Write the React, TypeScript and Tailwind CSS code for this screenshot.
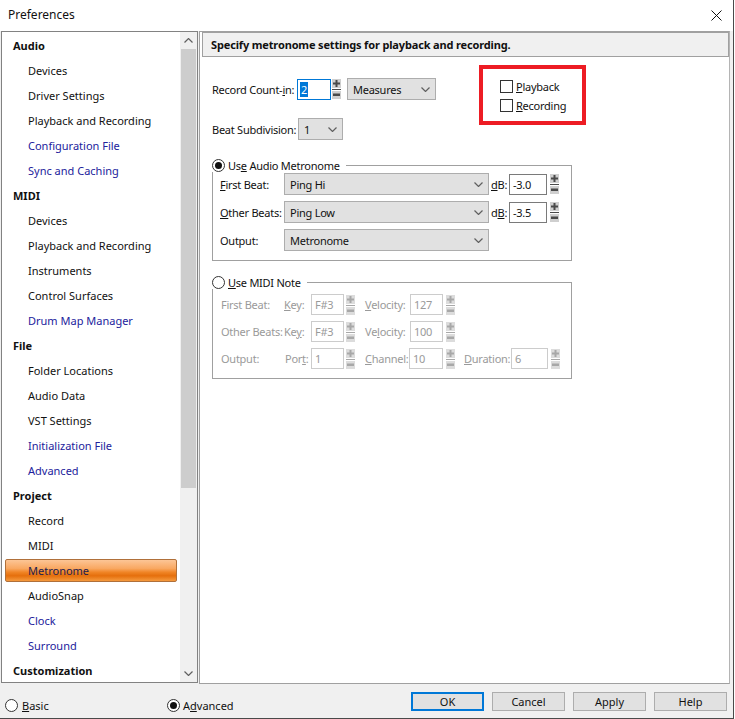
import React from "react";

// Preferences dialog — Metronome page of a DAW settings window.

type TreeItem = { label: string; head?: boolean; blue?: boolean; selected?: boolean };

const TREE: TreeItem[] = [
  { label: "Audio", head: true },
  { label: "Devices" },
  { label: "Driver Settings" },
  { label: "Playback and Recording" },
  { label: "Configuration File", blue: true },
  { label: "Sync and Caching", blue: true },
  { label: "MIDI", head: true },
  { label: "Devices" },
  { label: "Playback and Recording" },
  { label: "Instruments" },
  { label: "Control Surfaces" },
  { label: "Drum Map Manager", blue: true },
  { label: "File", head: true },
  { label: "Folder Locations" },
  { label: "Audio Data" },
  { label: "VST Settings" },
  { label: "Initialization File", blue: true },
  { label: "Advanced", blue: true },
  { label: "Project", head: true },
  { label: "Record" },
  { label: "MIDI" },
  { label: "Metronome", selected: true },
  { label: "AudioSnap" },
  { label: "Clock", blue: true },
  { label: "Surround", blue: true },
  { label: "Customization", head: true },
];

function Chevron({ up, color = "#606060" }: { up?: boolean; color?: string }) {
  return (
    <svg width="9" height="5" viewBox="0 0 9 5" className="shrink-0">
      <polyline
        points={up ? "0.5,4.5 4.5,0.5 8.5,4.5" : "0.5,0.5 4.5,4.5 8.5,0.5"}
        fill="none"
        stroke={color}
        strokeWidth="1.2"
      />
    </svg>
  );
}

function Spin({ disabled }: { disabled?: boolean }) {
  const fg = disabled ? "#a8a8a8" : "#4a4a4a";
  const bg = disabled ? "#dcdcdc" : "#cfcfcf";
  return (
    <svg width="9" height="20" viewBox="0 0 9 20" className="shrink-0">
      <rect x="0" y="0" width="9" height="9" fill={bg} />
      <rect x="1" y="3.5" width="7" height="2" fill={fg} />
      <rect x="3.5" y="1" width="2" height="7" fill={fg} />
      <rect x="0" y="10" width="9" height="1" fill={fg} />
      <rect x="0" y="12" width="9" height="8" fill={bg} />
      <rect x="1" y="14.5" width="7" height="2.5" fill={fg} />
    </svg>
  );
}

function Select({ value, w }: { value: string; w: string }) {
  return (
    <div
      className={`${w} h-[22px] shrink-0 flex items-center justify-between bg-[#e1e1e1] border border-[#adadad] pl-[5px] pr-[5px] text-[#111]`}
    >
      <span>{value}</span>
      <Chevron />
    </div>
  );
}

function Field({ value, w, disabled }: { value: string; w: string; disabled?: boolean }) {
  return (
    <div
      className={`${w} h-[21px] shrink-0 flex items-center bg-white border pl-[3px] ${
        disabled ? "border-[#cccccc] text-[#9a9a9a]" : "border-[#7a7a7a] text-[#111]"
      }`}
    >
      {value}
    </div>
  );
}

function Radio({ on }: { on?: boolean }) {
  return (
    <span className="w-[13px] h-[13px] shrink-0 rounded-full border border-[#333] bg-white flex items-center justify-center">
      {on && <span className="w-[7px] h-[7px] rounded-full bg-[#111]" />}
    </span>
  );
}

function Check() {
  return <span className="w-[13px] h-[13px] shrink-0 border border-[#333] bg-white" />;
}

function Tree() {
  return (
    <div className="w-[197px] h-[652px] ml-[1px] border border-[#828282] bg-white flex overflow-hidden">
      <div className="flex-1 pt-[1px] overflow-hidden">
        {TREE.map((t, i) => {
          if (t.head)
            return (
              <div key={i} className="h-[25px] flex items-center pl-[11px] font-bold text-[#111]">
                {t.label}
              </div>
            );
          if (t.selected)
            return (
              <div key={i} className="h-[25px] flex items-center">
                <div className="ml-[3px] w-[172px] h-[23px] flex items-center pl-[22px] rounded-[2px] border border-[#b0703a] bg-[linear-gradient(to_bottom,#fcc596_0%,#f9a862_40%,#f08526_58%,#e56f0c_75%,#f59a3e_100%)] text-[#1d1d50]">
                  {t.label}
                </div>
              </div>
            );
          return (
            <div
              key={i}
              className={`h-[25px] flex items-center pl-[26px] ${t.blue ? "text-[#22229c]" : "text-[#111]"}`}
            >
              {t.label}
            </div>
          );
        })}
      </div>
      <div className="w-[17px] bg-[#f0f0f0] flex flex-col">
        <div className="h-[17px] flex items-center justify-center">
          <Chevron up color="#606060" />
        </div>
        <div className="h-[439px] mx-[1px] bg-[#cdcdcd]" />
        <div className="flex-1" />
        <div className="h-[17px] flex items-center justify-center">
          <Chevron color="#606060" />
        </div>
      </div>
    </div>
  );
}

function Legend({ on, children }: { on?: boolean; children: React.ReactNode }) {
  return (
    <div className="absolute -top-[8px] -left-[1px] h-[14px] flex items-center gap-[3px] bg-white pr-[6px] text-[#111]">
      <Radio on={on} />
      <span>{children}</span>
    </div>
  );
}

function AudioGroup() {
  return (
    <div className="relative mt-[25px] w-[360px] border border-[#a0a0a0] pt-[7px] pb-[9px] pl-[7px] flex flex-col gap-[6px] text-[#111]">
      <Legend on>
        Us<u>e</u> Audio Metronome
      </Legend>
      <div className="flex items-center">
        <span className="w-[64px] shrink-0">
          <u>F</u>irst Beat:
        </span>
        <Select value="Ping Hi" w="w-[205px]" />
        <span className="w-[20px] shrink-0 pl-[2px]">
          <u>d</u>B:
        </span>
        <Field value="-3.0" w="w-[38px]" />
        <span className="ml-[3px]">
          <Spin />
        </span>
      </div>
      <div className="flex items-center">
        <span className="w-[64px] shrink-0">
          <u>O</u>ther Beats:
        </span>
        <Select value="Ping Low" w="w-[205px]" />
        <span className="w-[20px] shrink-0 pl-[2px]">
          d<u>B</u>:
        </span>
        <Field value="-3.5" w="w-[38px]" />
        <span className="ml-[3px]">
          <Spin />
        </span>
      </div>
      <div className="flex items-center">
        <span className="w-[64px] shrink-0">Output:</span>
        <Select value="Metronome" w="w-[205px]" />
      </div>
    </div>
  );
}

function MidiGroup() {
  return (
    <div className="relative mt-[21px] w-[360px] border border-[#a0a0a0] pt-[11px] pb-[9px] pl-[8px] flex flex-col gap-[6px] text-[#9a9a9a]">
      <Legend>
        <u>U</u>se MIDI Note
      </Legend>
      <div className="flex items-center h-[21px]">
        <span className="w-[63px] shrink-0">First Beat:</span>
        <span className="w-[27px] shrink-0">
          <u>K</u>ey:
        </span>
        <Field value="F#3" w="w-[33px]" disabled />
        <span className="ml-[2px]">
          <Spin disabled />
        </span>
        <span className="ml-[10px] w-[45px] shrink-0">
          <u>V</u>elocity:
        </span>
        <Field value="127" w="w-[33px]" disabled />
        <span className="ml-[3px]">
          <Spin disabled />
        </span>
      </div>
      <div className="flex items-center h-[21px]">
        <span className="w-[63px] shrink-0">Other Beats:</span>
        <span className="w-[27px] shrink-0">
          Ke<u>y</u>:
        </span>
        <Field value="F#3" w="w-[33px]" disabled />
        <span className="ml-[2px]">
          <Spin disabled />
        </span>
        <span className="ml-[10px] w-[45px] shrink-0">
          Ve<u>l</u>ocity:
        </span>
        <Field value="100" w="w-[33px]" disabled />
        <span className="ml-[3px]">
          <Spin disabled />
        </span>
      </div>
      <div className="flex items-center h-[21px]">
        <span className="w-[63px] shrink-0">Output:</span>
        <span className="w-[27px] shrink-0 pl-[1px]">
          Por<u>t</u>:
        </span>
        <Field value="1" w="w-[33px]" disabled />
        <span className="ml-[2px]">
          <Spin disabled />
        </span>
        <span className="ml-[10px] w-[44px] shrink-0">
          <u>C</u>hannel:
        </span>
        <Field value="10" w="w-[34px]" disabled />
        <span className="ml-[3px]">
          <Spin disabled />
        </span>
        <span className="ml-[9px] w-[47px] shrink-0">
          <u>D</u>uration:
        </span>
        <Field value="6" w="w-[37px]" disabled />
        <span className="ml-[3px]">
          <Spin disabled />
        </span>
      </div>
    </div>
  );
}

function Page() {
  return (
    <div className="w-[531px] h-[653px] ml-[1px] border border-[#a0a0a0] border-r-[#b4b4b4] bg-white flex flex-col">
      <div className="ml-[2px] h-[25px] border border-[#a0a0a0] bg-[#f0f0f0] flex items-center pl-[8px] pb-[1px] font-bold text-[#111] tracking-[-0.15px]">
        Specify metronome settings for playback and recording.
      </div>
      <div className="pl-[12px] flex flex-col tracking-[-0.25px]">
        <div className="flex items-start pt-[8px]">
          <div className="w-[224px] pt-[13px] flex flex-col gap-[18px] text-[#111]">
            <div className="h-[22px] flex items-center">
              <span className="w-[85px] shrink-0">
                Record Count-<u>i</u>n:
              </span>
              <div className="w-[34px] h-[21px] shrink-0 border border-[#0078d7] bg-white flex items-center pl-[2px]">
                <span className="bg-[#0078d7] text-white leading-[15px] px-[1px]">2</span>
              </div>
              <span className="ml-[1px]">
                <Spin />
              </span>
              <span className="ml-[6px]">
                <Select value="Measures" w="w-[89px]" />
              </span>
            </div>
            <div className="h-[22px] flex items-center">
              <span className="w-[86px] shrink-0">Beat Subdivision:</span>
              <Select value="1" w="w-[45px]" />
            </div>
          </div>
          <div className="ml-[43px] w-[107px] h-[60px] border-[4px] border-[#ed1c24] pt-[11px] pl-[17px] flex flex-col gap-[6px] text-[#111]">
            <div className="h-[13px] flex items-center gap-[3px]">
              <Check />
              <span>
                <u>P</u>layback
              </span>
            </div>
            <div className="h-[13px] flex items-center gap-[3px]">
              <Check />
              <span>
                <u>R</u>ecording
              </span>
            </div>
          </div>
        </div>
        <AudioGroup />
        <MidiGroup />
      </div>
    </div>
  );
}

function Button({ label, primary }: { label: string; primary?: boolean }) {
  return (
    <div
      className={`w-[73px] h-[19px] flex items-center justify-center bg-[#e1e1e1] text-[#111] ${
        primary ? "border-2 border-[#0078d7]" : "border border-[#adadad]"
      }`}
    >
      {label}
    </div>
  );
}

export default function App() {
  return (
    <div className="w-[735px] h-[719px] bg-white font-['Noto_Sans',sans-serif] text-[11px] leading-none whitespace-nowrap overflow-hidden">
      <div className="w-[734px] h-[719px] bg-[#f0f0f0] border-r border-b border-[#4a4a4a] flex flex-col">
        <div className="h-[31px] bg-white flex items-center justify-between pl-[8px] pr-[11px]">
          <span className="text-[12px] text-[#111] pb-[2px]">Preferences</span>
          <svg width="11" height="11" viewBox="0 0 11 11">
            <path d="M0.5 0.5 L10.5 10.5 M10.5 0.5 L0.5 10.5" stroke="#111" strokeWidth="1" />
          </svg>
        </div>
        <div className="flex">
          <Tree />
          <Page />
        </div>
        <div className="flex-1 flex items-start">
          <div className="pt-[15px] pl-[5px] flex items-center text-[#111]">
            <div className="flex items-center gap-[4px] w-[162px]">
              <Radio />
              <span>
                <u>B</u>asic
              </span>
            </div>
            <div className="flex items-center gap-[3px]">
              <Radio on />
              <span>
                A<u>d</u>vanced
              </span>
            </div>
          </div>
          <div className="ml-auto mr-[6px] pt-[8px] flex gap-[8px]">
            <Button label="OK" primary />
            <Button label="Cancel" />
            <Button label="Apply" />
            <Button label="Help" />
          </div>
        </div>
      </div>
    </div>
  );
}
